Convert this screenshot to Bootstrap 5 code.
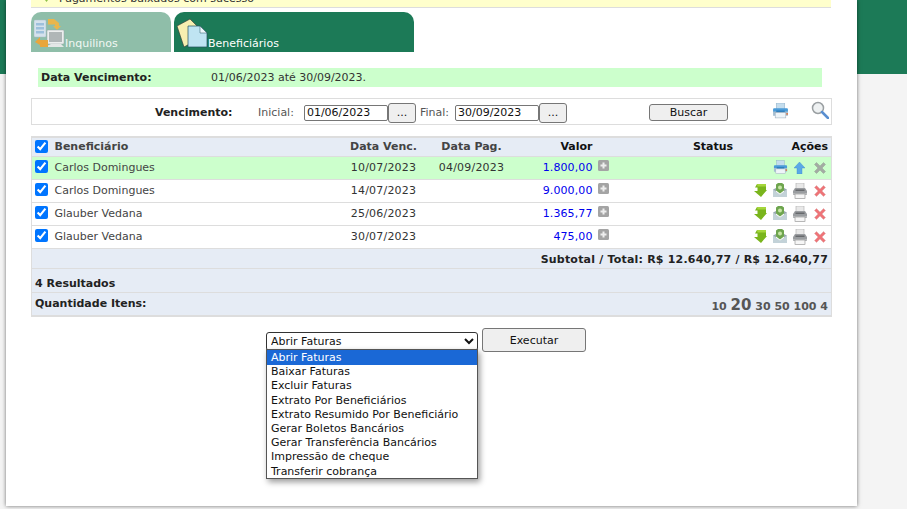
<!DOCTYPE html>
<html lang="pt-BR">
<head>
<meta charset="utf-8">
<title>Beneficiários</title>
<link href="https://cdn.jsdelivr.net/npm/bootstrap@5.3.0/dist/css/bootstrap.min.css" rel="stylesheet">
<style>
html,body{height:509px;overflow:hidden}
body{background:linear-gradient(#1c7a57 0,#1c7a57 74px,#f4f4f4 74px);font-family:"DejaVu Sans",Verdana,sans-serif;font-size:11px;color:#333;line-height:14px}
.sheet{margin-left:6px;width:851px;height:506px;background:#fff;box-shadow:0 0 4px rgba(0,0,0,.55);padding:0 25px;overflow:hidden;position:relative}
.notice{height:8px;background:#ffffcc;border-bottom:1px solid #ddd;overflow:hidden;width:800px}
.notice>div{margin-top:-8px;padding-left:11px;color:#333;gap:8px}
.tabs{margin-top:4px;height:40px;gap:3px}
.tabx{height:40px;border-radius:10px 10px 0 0;background:#1c7a57;color:#fff;font-size:11px;align-items:flex-end;display:flex;padding-bottom:1px}
.tabx svg{margin-bottom:3px}
.tabx.one{width:140px;background:#8fbea9;color:#f2f8f4;padding-left:3px}
.tabx.two{width:240px;padding-left:3px}
.duebar{margin:16px 0 0 7px;width:784px;height:19px;background:#ccffcc;padding-left:3px;color:#333}
.duebar b{width:170px;color:#222}
.filter{margin-top:11px;width:801px;height:27px;border:1px solid #ddd;color:#333;padding-top:2px}
.filter b{margin-left:123px;width:103px;color:#222}
.lbl{color:#555}
.gapr{margin-right:6px}
.gapf{margin-right:2px}
.fld{width:84px;height:16px;border:1px solid #767676;border-radius:2px;font:11px "DejaVu Sans",sans-serif;padding:0 2px;color:#111;box-sizing:border-box;margin-left:4px}
.dots{width:28px;height:20px;border:1px solid #767676;border-radius:3px;background:#efefef;font:11px "DejaVu Sans",sans-serif;padding:0;color:#111}
.srch{width:79px;height:17px;margin-left:82px;border:1px solid #767676;border-radius:3px;background:#efefef;font:11px "DejaVu Sans",sans-serif;padding:0;color:#111}
.pico{margin-left:44px;margin-top:-4px}
.zico{margin-left:22px;margin-top:-6px}
.grid{margin:11px 0 0;width:800px;table-layout:fixed;border-collapse:collapse;border:1px solid #ddd;border-width:2px 1px 2px 1px;font-size:11px;color:#444}
.grid td,.grid th{padding:0 2px;border:0;border-bottom:1px solid #ddd;vertical-align:middle;background:transparent;box-shadow:none;color:inherit;white-space:nowrap}
.grid input{display:block;margin:-2px 0 0 1px;width:13px;height:13px}
.grid .hd{height:19px;background:#e6ecf5;font-weight:700;color:#444}
.grid .hd td{padding-top:1px}
.grid .rw{height:23px;background:#fff}
.grid .ok{background:#ccffcc}
.grid .sum{height:20px;background:#e6ecf5;color:#222;font-weight:700;letter-spacing:.2px}
.grid .sum td{padding:4px 3px 0 0}
.grid .res{height:24px;background:#e6ecf5;color:#222;font-weight:700}
.grid .hd>*,.grid .sum>*,.grid .res>*{background:transparent}
.grid .nm{padding-left:1px}
.grid .r3{padding-right:3px}
.grid .rs{padding:8px 0 0 3px}
.grid .qt{padding:0 0 0 3px}
.dk{color:#111!important}
.dt{color:#333!important;letter-spacing:.2px}
.val{color:#0000ee!important;text-align:right;letter-spacing:.1px}
.grid .pg{font-size:11px;color:#555;vertical-align:bottom;padding:0 3px 1px 0}
.pg em{font-style:normal;font-size:15px}
.icons{padding-right:3px}
.m1{margin-right:6px}
.m2{margin-right:5px;margin-bottom:2px}
.m3{margin-right:9px}
.plusi{margin:0 0 4px 1px}
.runrow{margin-top:11px;position:relative;height:24px;padding-left:235px;gap:4px}
.runsel{width:212px;height:19px;margin-top:4px;border:1px solid #333;border-radius:3px;font:11px "DejaVu Sans",sans-serif;padding:0;background:#fff;color:#111}
.runbtn{width:104px;height:24px;border:1px solid #767676;border-radius:3px;background:#efefef;font:11px "DejaVu Sans",sans-serif;color:#111;padding:0}
.drop{position:absolute;left:235px;top:21px;width:212px;height:130px;background:#fff;border:1px solid #555;box-shadow:2px 3px 6px rgba(0,0,0,.4);z-index:5;font-size:11px;color:#111;line-height:14.2px}
.drop div{padding-left:4px;height:14.2px;white-space:nowrap}
.drop .cur{background:#1a68d6;color:#fff;height:15.2px;padding-top:1px}
</style>
</head>
<body>
<svg width="0" height="0" class="d-block" aria-hidden="true">
<defs>
<symbol id="printb" viewBox="0 0 16 15"><rect x="4" y="0" width="8" height="6" fill="#c4dded" stroke="#8fb0c8" stroke-width=".5"/><rect x="1" y="5" width="14" height="4" rx="1" fill="#4a9bd8"/><rect x="1" y="8" width="14" height="4" fill="#a5bfd2"/><rect x="3" y="9" width="10" height="5" fill="#eef4f8" stroke="#9ab" stroke-width=".5"/><rect x="4" y="7" width="8" height="1.500" fill="#2f7fbd"/><rect x="13.500" y="9.500" width="1.500" height="1.500" fill="#e0703a"/></symbol>
<symbol id="printg" viewBox="0 0 16 16"><rect x="4" y="0" width="8" height="6" fill="#e8e8e8" stroke="#aaa" stroke-width=".6"/><path d="M3 5H13L15 8V12H1V8z" fill="#9a9da0"/><rect x="3.500" y="6.500" width="9" height="1.500" fill="#66696c"/><rect x="1" y="10" width="14" height="2" fill="#b8babc"/><rect x="3" y="11" width="10" height="4.500" fill="#f6f6f6" stroke="#8a8a8a" stroke-width=".6"/></symbol>
<symbol id="xred" viewBox="0 0 12 12"><path d="M2.500 .5 6 4 9.500 .5 11.500 2.500 8 6l3.500 3.500-2 2L6 8 2.500 11.500l-2-2L4 6 .5 2.500z" fill="#ee7478" stroke="#dfa6a6" stroke-width=".5"/></symbol>
<symbol id="xgrey" viewBox="0 0 12 12"><path d="M2.500 .5 6 4 9.500 .5 11.500 2.500 8 6l3.500 3.500-2 2L6 8 2.500 11.500l-2-2L4 6 .5 2.500z" fill="#a3aba3" stroke="#8a948a" stroke-width=".4"/></symbol>
<symbol id="down" viewBox="0 0 14 13"><path d="M4 0H13V6H14L8 13 1 7H4.500V3.500H2z" fill="#7ab51d"/><path d="M4 0H13V2.500H4.500z" fill="#a5d63c"/></symbol>
<symbol id="mail" viewBox="0 0 14 14"><path d="M0 6.500 7 11.500 14 6.500V14H0z" fill="#c3d2d8"/><path d="M0 6.500 3 5V8.700zM14 6.500 11 5V8.700z" fill="#9aa9b0"/><path d="M3 1.500 5 0H9L11 1.500V7.500L7 10.500 3 7.500z" fill="#6ea54e"/><circle cx="7" cy="4.500" r="2" fill="#c8e6a8"/></symbol>
<symbol id="upb" viewBox="0 0 11 12"><path d="M5.500 0 11 6H8V12H3V6H0z" fill="#5aa9e6" stroke="#3a8ad0" stroke-width=".4"/></symbol>
<symbol id="plus" viewBox="0 0 11 11"><rect width="11" height="11" rx="1.500" fill="#a4a4a4"/><path d="M4.500 2.500h2v2h2v2h-2v2h-2v-2h-2v-2h2z" fill="#eee"/></symbol>
</defs>
</svg>
<div class="sheet">
  <div class="notice"><div class="d-flex"><svg width="9" height="14" viewBox="0 0 9 14"><path d="M0 4h9L4.500 10z" fill="#8fc14a"/></svg><span>Pagamentos baixados com sucesso</span></div></div>

  <div class="d-flex tabs">
    <div class="tabx one">
      <svg width="31" height="30" viewBox="0 0 31 30" class="flex-shrink-0"><rect x="0" y="2" width="12" height="17" rx="1" fill="#d5e2ec" stroke="#a8b8c4" stroke-width=".5"/><rect x="2" y="5" width="8" height="2.500" fill="#9dc0dc"/><rect x="2" y="9" width="8" height="2.500" fill="#9dc0dc"/><rect x="2" y="13" width="8" height="2.500" fill="#9dc0dc"/><path d="M14 1h6l5 4v3h2l-4 4-4-4h2V6.500h-7z" fill="#e9b64c"/><rect x="13" y="12" width="17" height="14" rx="1" fill="#eceeee" stroke="#9aa3a5" stroke-width=".5"/><rect x="15" y="14" width="13" height="10" fill="#b0b6b7"/><path d="M17 26h10l3 3H11z" fill="#e4e7e7"/><path d="M1 24l5-5v3h8v7H6v-2z" fill="#e9a63c"/></svg>
      <span>Inquilinos</span>
    </div>
    <div class="tabx two">
      <svg width="31" height="30" viewBox="0 0 31 30" class="flex-shrink-0"><path d="M0 8 13 1l7 7-2 15-11 6z" fill="#f7efb0" stroke="#333" stroke-width=".6"/><path d="M11 8h12l7 7v14H11z" fill="#bfe4f2" stroke="#23505f" stroke-width=".7"/><path d="M23 8v7h7z" fill="#eef8fc" stroke="#23505f" stroke-width=".5"/></svg>
      <span>Beneficiários</span>
    </div>
  </div>

  <div class="duebar d-flex align-items-center"><b>Data Vencimento:</b><span>01/06/2023 até 30/09/2023.</span></div>

  <div class="filter d-flex align-items-center">
    <b>Vencimento:</b>
    <span class="lbl gapr">Inicial:</span>
    <input class="fld" value="01/06/2023" aria-label="Inicial"><button class="dots">...</button>
    <span class="lbl ms-1 gapf">Final:</span>
    <input class="fld" value="30/09/2023" aria-label="Final"><button class="dots">...</button>
    <button class="srch">Buscar</button>
    <svg width="17" height="16" class="pico"><use href="#printb"/></svg>
    <svg width="18" height="18" viewBox="0 0 18 18" class="zico"><circle cx="7" cy="7" r="5.500" fill="#eef1f2" stroke="#9a9fa2" stroke-width="1.500"/><path d="M11 11l6 6" stroke="#5a8fd0" stroke-width="2.500" stroke-linecap="round"/></svg>
  </div>

  <table class="table grid">
    <colgroup><col style="width:22px"><col style="width:287px"><col style="width:86px"><col style="width:90px"><col style="width:78px"><col style="width:46px"><col style="width:145px"><col style="width:46px"></colgroup>
    <tr class="hd"><td><input type="checkbox" checked aria-label="Todos"></td><td class="nm">Beneficiário</td><td class="text-center">Data Venc.</td><td class="text-center">Data Pag.</td><td class="text-end dk">Valor</td><td></td><td class="text-center dk">Status</td><td class="text-end dk r3">Ações</td></tr>
    <tr class="rw ok"><td><input type="checkbox" checked aria-label="Selecionar"></td><td class="nm">Carlos Domingues</td><td class="text-center dt">10/07/2023</td><td class="text-center dt">04/09/2023</td><td class="val">1.800,00</td><td><svg width="11" height="11" class="d-block plusi"><use href="#plus"/></svg></td><td colspan="2"><div class="d-flex justify-content-end align-items-center icons"><svg width="15" height="15" class="m1"><use href="#printb"/></svg><svg width="11" height="12" class="m3"><use href="#upb"/></svg><svg width="12" height="12"><use href="#xgrey"/></svg></div></td></tr>
    <tr class="rw"><td><input type="checkbox" checked aria-label="Selecionar"></td><td class="nm">Carlos Domingues</td><td class="text-center dt">14/07/2023</td><td></td><td class="val">9.000,00</td><td><svg width="11" height="11" class="d-block plusi"><use href="#plus"/></svg></td><td colspan="2"><div class="d-flex justify-content-end align-items-center icons"><svg width="14" height="13" class="m1"><use href="#down"/></svg><svg width="14" height="14" class="m2"><use href="#mail"/></svg><svg width="16" height="16" class="m1"><use href="#printg"/></svg><svg width="12" height="12"><use href="#xred"/></svg></div></td></tr>
    <tr class="rw"><td><input type="checkbox" checked aria-label="Selecionar"></td><td class="nm">Glauber Vedana</td><td class="text-center dt">25/06/2023</td><td></td><td class="val">1.365,77</td><td><svg width="11" height="11" class="d-block plusi"><use href="#plus"/></svg></td><td colspan="2"><div class="d-flex justify-content-end align-items-center icons"><svg width="14" height="13" class="m1"><use href="#down"/></svg><svg width="14" height="14" class="m2"><use href="#mail"/></svg><svg width="16" height="16" class="m1"><use href="#printg"/></svg><svg width="12" height="12"><use href="#xred"/></svg></div></td></tr>
    <tr class="rw"><td><input type="checkbox" checked aria-label="Selecionar"></td><td class="nm">Glauber Vedana</td><td class="text-center dt">30/07/2023</td><td></td><td class="val">475,00</td><td><svg width="11" height="11" class="d-block plusi"><use href="#plus"/></svg></td><td colspan="2"><div class="d-flex justify-content-end align-items-center icons"><svg width="14" height="13" class="m1"><use href="#down"/></svg><svg width="14" height="14" class="m2"><use href="#mail"/></svg><svg width="16" height="16" class="m1"><use href="#printg"/></svg><svg width="12" height="12"><use href="#xred"/></svg></div></td></tr>
    <tr class="sum"><td colspan="8" class="text-end">Subtotal / Total: R$ 12.640,77 / R$ 12.640,77</td></tr>
    <tr class="res"><td colspan="8" class="rs">4 Resultados</td></tr>
    <tr class="res"><td colspan="6" class="qt">Quantidade Itens:</td><td colspan="2" class="text-end pg">10 <em>20</em> 30 50 100 4</td></tr>
  </table>

  <div class="runrow d-flex align-items-start">
    <select class="runsel" aria-label="Ação"><option>Abrir Faturas</option></select>
    <button class="runbtn">Executar</button>
    <div class="drop">
      <div class="cur">Abrir Faturas</div><div>Baixar Faturas</div><div>Excluir Faturas</div><div>Extrato Por Beneficiários</div><div>Extrato Resumido Por Beneficiário</div><div>Gerar Boletos Bancários</div><div>Gerar Transferência Bancários</div><div>Impressão de cheque</div><div>Transferir cobrança</div>
    </div>
  </div>
</div>
</body>
</html>
